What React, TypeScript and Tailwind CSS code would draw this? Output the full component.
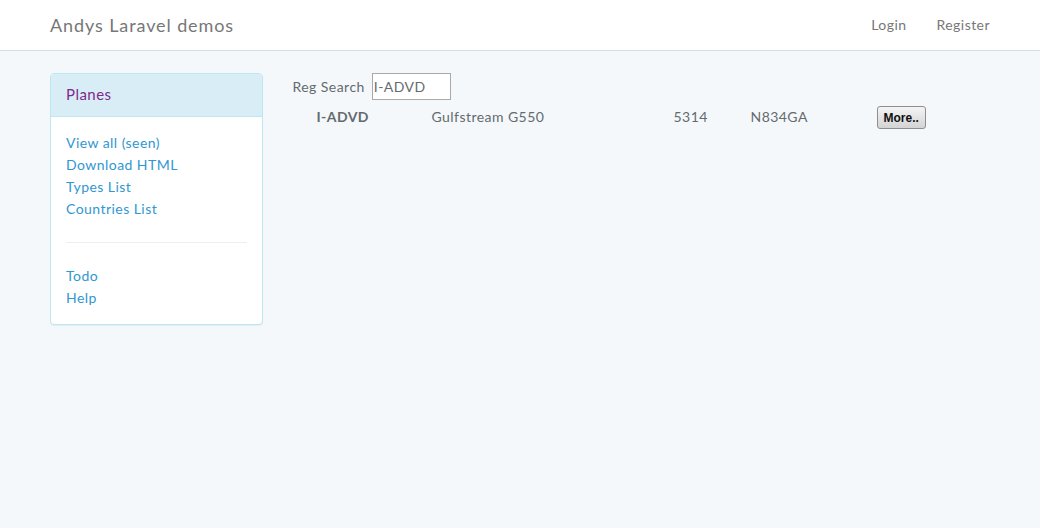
export default function App() {
  const font = { fontFamily: "Lato, 'Open Sans', sans-serif" };
  return (
    <div className="min-h-[528px] bg-[#f5f8fa] text-[14px] leading-[22px] tracking-[0.45px] text-[#636b6f]" style={font}>
      <nav className="h-[51px] border-b border-[#d3e0e9] bg-white">
        <div className="mx-auto flex h-[49px] w-[970px] items-center justify-between px-[15px]">
          <a className="text-[18px] tracking-[0.9px] text-[#777]">Andys Laravel demos</a>
          <ul className="flex text-[#777]">
            <li className="px-[15px]">Login</li>
            <li className="pl-[15px]">Register</li>
          </ul>
        </div>
      </nav>
      <div className="mx-auto flex w-[970px] pt-[22px]">
        <div className="w-[242.5px] px-[15px]">
          <div className="overflow-hidden rounded-[4px] border border-[#bce8f1] bg-white shadow-[0_1px_1px_rgba(0,0,0,0.05)]">
            <div className="h-[43px] border-b border-[#bce8f1] bg-[#d9edf7] px-[15px] pt-[9px] text-[15px] text-[#7f2a8a]">
              Planes
            </div>
            <div className="px-[15px] pt-[15px] pb-[15px] text-[#3097d1]">
              <div>
                <div>View all (seen)</div>
                <div>Download HTML</div>
                <div>Types List</div>
                <div>Countries List</div>
              </div>
              <hr className="my-[22px] border-[#eee]" />
              <div>
                <div>Todo</div>
                <div>Help</div>
              </div>
            </div>
          </div>
        </div>
        <div className="flex-1 px-[15px]">
          <div className="flex items-center">
            <span className="mr-[7px]">Reg Search</span>
            <input
              defaultValue="I-ADVD"
              className="h-[27px] w-[79px] border border-[#a9a9a9] bg-white px-[1px] text-[14px] tracking-[0.45px] text-[#636b6f] outline-none"
              style={font}
            />
          </div>
          <div className="mt-[4px] flex items-center">
            <span className="w-[139px] pl-[24px] font-bold">I-ADVD</span>
            <span className="w-[242px]">Gulfstream G550</span>
            <span className="w-[77px]">5314</span>
            <span className="w-[126px]">N834GA</span>
            <button
              className="mt-[2px] h-[23px] rounded-[3px] border border-[#8e8e8e] bg-gradient-to-b from-[#f4f4f4] to-[#d4d4d4] px-[6px] text-[12px] font-bold tracking-normal text-[#111]"
              style={{ fontFamily: "'Liberation Sans', Arial, sans-serif" }}
            >
              More..
            </button>
          </div>
        </div>
      </div>
    </div>
  );
}
